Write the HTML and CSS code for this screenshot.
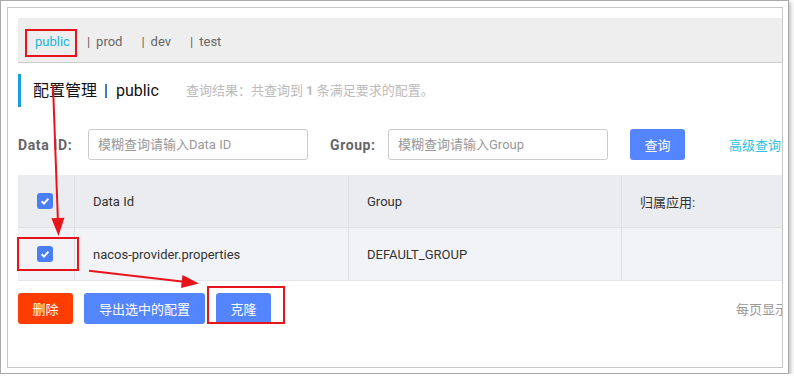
FILE: index.html
```html
<!DOCTYPE html>
<html lang="zh-CN">
<head>
    <meta charset="UTF-8">
    <title>配置管理</title>
    <link rel="stylesheet" href="styles.css">
</head>
<body>
    <div class="frame">
        <div class="panel">
            <div class="content">
                <div class="tabs">
                    <span class="tab active">public</span>
                    <span class="tab first"><i class="bar">|</i>prod</span>
                    <span class="tab"><i class="bar">|</i>dev</span>
                    <span class="tab"><i class="bar">|</i>test</span>
                </div>

                <div class="title-row">
                    <h2 class="title">配置管理<span class="title-sep">|</span>public</h2>
                    <span class="result">查询结果：共查询到 <b>1</b> 条满足要求的配置。</span>
                </div>

                <div class="search">
                    <label class="label" for="dataId">Data ID:</label>
                    <input class="field" id="dataId" type="text" placeholder="模糊查询请输入Data ID">
                    <label class="label short" for="group">Group:</label>
                    <input class="field" id="group" type="text" placeholder="模糊查询请输入Group">
                    <button class="btn primary">查询</button>
                    <a class="advanced">高级查询</a>
                </div>

                <table class="config-table">
                    <thead>
                        <tr>
                            <th class="col-check"><span class="checkbox"><svg viewBox="0 0 16 16"><path d="M4.6 8.3 L7 10.6 L11.4 5.6"/></svg></span></th>
                            <th class="col-id">Data Id</th>
                            <th class="col-group">Group</th>
                            <th>归属应用:</th>
                        </tr>
                    </thead>
                    <tbody>
                        <tr>
                            <td class="col-check"><span class="checkbox"><svg viewBox="0 0 16 16"><path d="M4.6 8.3 L7 10.6 L11.4 5.6"/></svg></span></td>
                            <td>nacos-provider.properties</td>
                            <td>DEFAULT_GROUP</td>
                            <td></td>
                        </tr>
                    </tbody>
                </table>

                <div class="actions">
                    <button class="btn danger">删除</button>
                    <button class="btn primary wide">导出选中的配置</button>
                    <button class="btn primary">克隆</button>
                    <span class="pager">每页显示</span>
                </div>
            </div>
        </div>
    </div>

    <!-- annotations drawn over the screenshot -->
    <svg class="marks" width="794" height="377" viewBox="0 0 794 377">
        <g fill="none" stroke="#e8141c" stroke-width="2">
            <rect x="26" y="30" width="50" height="26"/>
            <rect x="18" y="238" width="60" height="32"/>
            <rect x="208" y="287" width="76" height="36"/>
            <line x1="53" y1="85" x2="57.9" y2="220"/>
            <line x1="89" y1="270.7" x2="184" y2="281.7"/>
        </g>
        <g fill="#e8141c">
            <polygon points="58.5,236 51.4,218.2 64.4,217.8"/>
            <polygon points="199,283.5 182.5,275 181,288"/>
        </g>
    </svg>
</body>
</html>
```

FILE: styles.css
```css
body {
    margin: 0;
    background-color: #fff;
    font-family: Roboto, "Noto Sans CJK SC", sans-serif;
    font-size: 13px;
    color: #333;
}
.frame {
    width: 776px;
    padding: 6px 5px 5px 6px;
    border: 1px solid #aaa;
    box-shadow: 2px 2px 4px rgba(0,0,0,0.25);
    background-color: #fff;
}
.panel {
    height: 349px;
    padding: 10px 0 0 10px;
    border: 1px solid #c8c8c8;
    overflow: hidden;
}
.content {
    width: 900px;
}
.tabs {
    display: flex;
    align-items: center;
    height: 40px;
    padding: 4px 0 0 7px;
    background-color: #eee;
    border-bottom: 1px solid #ccc;
    color: #666;
}
.tab {
    margin-left: 19px;
    line-height: 26px;
}
.tab.active {
    margin-left: 0;
    padding: 0 8px 0 10px;
    color: #1ab4dc;
}
.tab.first {
    margin-left: 9px;
}
.tab .bar {
    font-style: normal;
    margin-right: 6px;
}
.title-row {
    box-sizing: border-box;
    display: flex;
    align-items: center;
    height: 33px;
    margin-top: 11px;
    padding-bottom: 3px;
    border-left: 3px solid #1a9fd8;
}
.title {
    margin: 0 0 0 12px;
    font-size: 16px;
    font-weight: normal;
    color: #111;
}
.title-sep {
    margin: 0 8px 0 7px;
}
.result {
    margin-left: 27px;
    color: #bbb;
}
.search {
    display: flex;
    align-items: center;
    margin-top: 22px;
}
.label {
    width: 70px;
    font-size: 14px;
    font-weight: bold;
    letter-spacing: 0.6px;
    color: #666;
}
.label.short {
    width: 58px;
}
.field {
    box-sizing: border-box;
    width: 220px;
    height: 31px;
    padding: 0 9px;
    margin: 0 22px 0 0;
    border: 1px solid #ccc;
    border-radius: 3px;
    font-family: inherit;
    font-size: 13px;
}
.field::placeholder {
    color: #999;
}
.btn {
    height: 31px;
    width: 55px;
    padding: 0;
    border: none;
    border-radius: 3px;
    color: #fff;
    font-family: inherit;
    font-size: 13px;
}
.btn.primary {
    background-color: #5584ff;
}
.btn.danger {
    background-color: #ff3d00;
}
.btn.wide {
    width: 121px;
}
.advanced {
    margin-left: 44px;
    color: #2fbfe0;
}
.config-table {
    width: 820px;
    margin-top: 15px;
    border-collapse: collapse;
    table-layout: fixed;
}
.config-table th,
.config-table td {
    height: 52px;
    padding: 0 0 0 18px;
    text-align: left;
    font-weight: normal;
    color: #333;
    border-right: 1px solid #dcdee3;
}
.config-table th {
    background-color: #ebecf0;
    border-bottom: 1px solid #dcdee3;
}
.config-table td {
    background-color: #f2f3f7;
    border-bottom: 1px solid #e4e6eb;
}
.config-table .col-check {
    width: 56px;
    padding: 0;
    text-align: center;
}
.col-id {
    width: 255px;
}
.col-group {
    width: 254px;
}
.checkbox {
    display: inline-block;
    width: 16px;
    height: 16px;
    margin-left: -2px;
    border-radius: 3px;
    background-color: #4a7ef7;
    vertical-align: middle;
}
.checkbox svg {
    display: block;
    width: 16px;
    height: 16px;
    fill: none;
    stroke: #fff;
    stroke-width: 2;
}
.actions {
    display: flex;
    align-items: center;
    gap: 11px;
    margin-top: 12px;
}
.pager {
    margin-left: 454px;
    color: #999;
}
.marks {
    position: absolute;
    left: 0;
    top: 0;
    pointer-events: none;
}
```
